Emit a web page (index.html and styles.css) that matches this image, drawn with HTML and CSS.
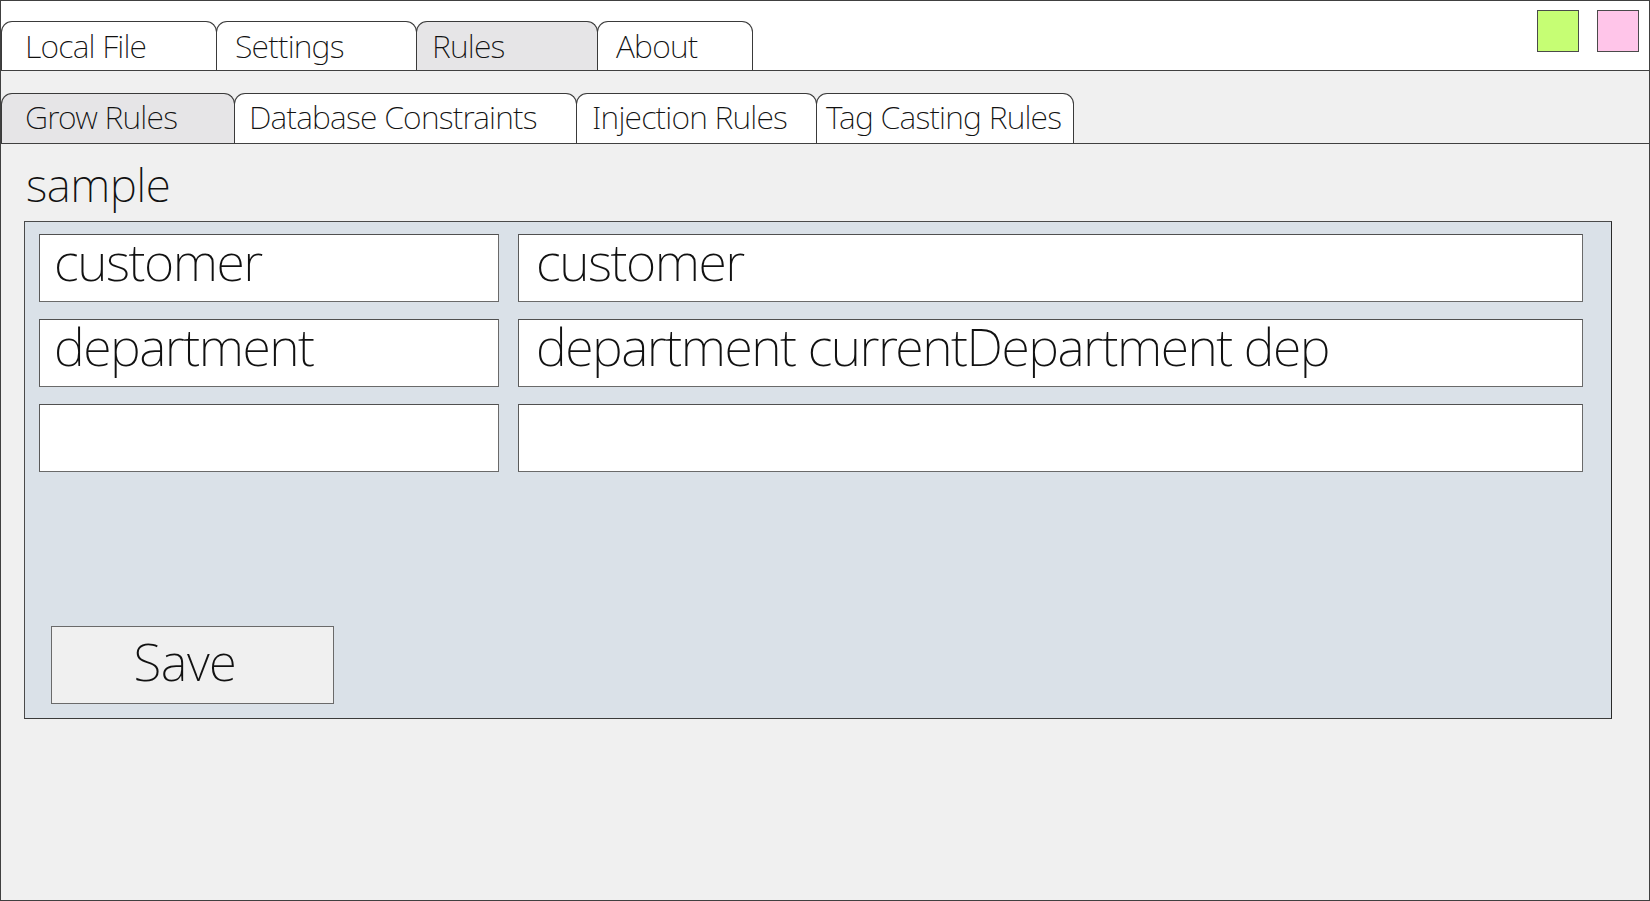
FILE: index.html
```html
<!DOCTYPE html>
<html lang="en">
<head>
<meta charset="utf-8">
<title>Rules - Grow Rules</title>
<link rel="stylesheet" href="styles.css">
</head>
<body>
<div class="window">
  <header class="topbar">
    <nav class="tabs main-tabs">
      <div class="tab t-local">Local File</div>
      <div class="tab t-settings">Settings</div>
      <div class="tab t-rules active">Rules</div>
      <div class="tab t-about">About</div>
    </nav>
    <div class="win-buttons">
      <span class="wbtn green"></span>
      <span class="wbtn pink"></span>
    </div>
  </header>
  <nav class="tabs sub-tabs">
    <div class="tab t-grow active">Grow Rules</div>
    <div class="tab t-db">Database Constraints</div>
    <div class="tab t-inj">Injection Rules</div>
    <div class="tab t-tag">Tag Casting Rules</div>
  </nav>
  <main class="content">
    <div class="title">sample</div>
    <section class="panel">
      <div class="grid">
        <div class="field">customer</div>
        <div class="field wide">customer</div>
        <div class="field">department</div>
        <div class="field wide">department currentDepartment dep</div>
        <div class="field"></div>
        <div class="field wide"></div>
      </div>
      <button class="save">Save</button>
    </section>
  </main>
</div>
</body>
</html>
```
FILE: styles.css
```css
* { box-sizing: border-box; }

html, body {
  margin: 0;
  padding: 0;
  background: #f0f0f0;
}

body {
  font-family: "Noto Sans", "Open Sans", "Liberation Sans", sans-serif;
  font-weight: 200;
  color: #111;
}

.window {
  width: 1650px;
  height: 901px;
  border: 1px solid #404040;
  background: #f0f0f0;
  display: flex;
  flex-direction: column;
  overflow: hidden;
}

.topbar {
  height: 70px;
  flex: none;
  background: #ffffff;
  border-bottom: 1px solid #404040;
  display: flex;
  justify-content: space-between;
  align-items: flex-end;
}

.tabs {
  display: flex;
  align-items: flex-end;
}

.tab {
  height: 49px;
  border: 1px solid #3a3a3a;
  border-bottom: none;
  border-radius: 11px 11px 0 0;
  background: #ffffff;
  font-size: 32px;
  letter-spacing: -0.8px;
  line-height: 48px;
  white-space: nowrap;
  padding-left: 18px;
  margin-left: -1px;
}

.tab:first-child { margin-left: 0; }

.tab.active { background: #e6e5e7; }

.t-local { width: 216px; padding-left: 23px; }
.t-settings { width: 201px; padding-left: 18px; }
.t-rules { width: 182px; padding-left: 15px; }
.t-about { width: 156px; padding-left: 18px; }

.sub-tabs {
  flex: none;
  height: 73px;
  border-bottom: 1px solid #404040;
}

.sub-tabs .tab { height: 50px; line-height: 46px; }

.t-grow { width: 234px; padding-left: 23px; }
.t-db { width: 343px; padding-left: 14px; }
.t-inj { width: 241px; padding-left: 15px; }
.t-tag { width: 258px; padding-left: 9px; }

.win-buttons {
  align-self: flex-start;
  display: flex;
  gap: 18px;
  margin-top: 9px;
  margin-right: 10px;
}

.wbtn {
  display: block;
  width: 42px;
  height: 42px;
  border: 1px solid #4a4a4a;
}

.wbtn.green { background: #c6fe74; }
.wbtn.pink { background: #ffc5e9; }

.content {
  flex: 1;
  padding: 17px 0 0 23px;
}

.title {
  font-size: 46px;
  letter-spacing: -0.5px;
  line-height: 46px;
  height: 46px;
  margin-left: 2px;
  margin-bottom: 14px;
}

.panel {
  width: 1588px;
  height: 498px;
  background: #dae1e8;
  border: 1px solid #4a4a4a;
  border-right-color: #2a2a2a;
  border-bottom-color: #3a3a3a;
  padding: 12px 28px 14px 14px;
  display: flex;
  flex-direction: column;
}

.grid {
  display: grid;
  grid-template-columns: 460px 1fr;
  column-gap: 19px;
  row-gap: 17px;
}

.field {
  height: 68px;
  background: #ffffff;
  border: 1px solid #6a6a6a;
  border-top-color: #505050;
  border-left-color: #5a5a5a;
  font-size: 52px;
  letter-spacing: -1.5px;
  line-height: 52px;
  padding-left: 14px;
  white-space: nowrap;
}

.field.wide { padding-left: 17px; }

.save {
  margin-top: auto;
  margin-left: 12px;
  width: 283px;
  height: 78px;
  background: #f0f0f0;
  border: 1px solid #6a6a6a;
  border-radius: 0;
  font-family: inherit;
  font-weight: 200;
  font-size: 51px;
  letter-spacing: -0.5px;
  line-height: 51px;
  color: #111;
  padding: 0 15px 8px 0;
}
```
